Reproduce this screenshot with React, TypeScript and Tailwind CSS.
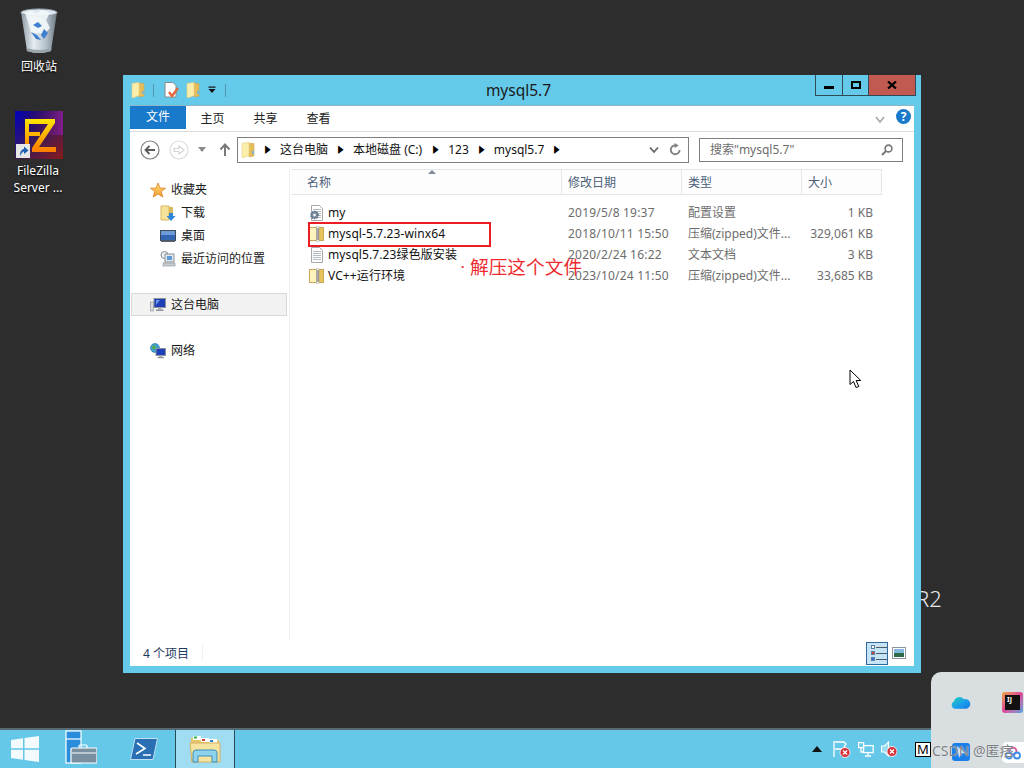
import React from "react";

const FONT = { fontFamily: '"Noto Sans", "Noto Sans CJK SC", sans-serif' };

function Folder({ className = "" }: { className?: string }) {
  return (
    <svg viewBox="0 0 14 16" className={className}>
      <path d="M5 1 L13 1.5 V14 L8 15 Z" fill="#e3bd5c" stroke="#cba347" strokeWidth="0.5" />
      <path d="M1 1.5 L8 0.5 V13.5 L3 15.5 H1 Z" fill="#fbeeab" stroke="#ead27e" strokeWidth="0.6" />
      <rect x="11" y="9" width="2" height="3" fill="#7fb4cc" />
    </svg>
  );
}

function Zip({ className = "" }: { className?: string }) {
  return (
    <svg viewBox="0 0 16 16" className={className}>
      <rect x="0.5" y="1.5" width="14" height="13" fill="#f5da7e" stroke="#c9a953" />
      <rect x="1" y="2" width="6" height="12" fill="#fdf3bd" />
      <rect x="10" y="2" width="4" height="12" fill="#e8c25a" />
      <rect x="7.5" y="0.8" width="2.5" height="14.4" fill="#fff" stroke="#9a9a9a" strokeWidth="0.5" />
      <path d="M7.5 3h2.5M7.5 5h2.5M7.5 7h2.5M7.5 9h2.5M7.5 11h2.5M7.5 13h2.5" stroke="#444" strokeWidth="0.9" />
    </svg>
  );
}

function Doc({ className = "", gear = false }: { className?: string; gear?: boolean }) {
  return (
    <svg viewBox="0 0 16 16" className={className}>
      <path d="M2.5 0.5 H10.5 L13.5 3.5 V15.5 H2.5 Z" fill="#fff" stroke="#a8a8a8" />
      <path d="M4 4.5h8M4 6.5h8M4 8.5h8M4 10.5h8M4 12.5h8" stroke="#b4bcc4" />
      {gear && (
        <g>
          <circle cx="5.5" cy="10" r="3.6" fill="#7d8ea0" stroke="#556678" strokeWidth="1.3" strokeDasharray="1.4 0.9" />
          <circle cx="5.5" cy="10" r="1.3" fill="#fff" />
        </g>
      )}
    </svg>
  );
}

function Row({ icon, name, date, type, size }: { icon: React.ReactNode; name: string; date: string; type: string; size: string }) {
  return (
    <div className="grid grid-cols-[271px_120px_120px_80px] h-[21px] items-center text-[12px] leading-[21px]">
      <div className="pl-[18px] flex items-center gap-[3px] text-[#111] tracking-[0.1px] whitespace-nowrap">
        {icon}
        <span>{name}</span>
      </div>
      <div className="pl-[6px] text-[#6d6d6d] tracking-[0.2px]">{date}</div>
      <div className="pl-[6px] text-[#6d6d6d] whitespace-nowrap">{type}</div>
      <div className="pr-[9px] text-right text-[#6d6d6d] whitespace-nowrap">{size}</div>
    </div>
  );
}

function HeadCell({ label, border = true, pl = "pl-[6px]" }: { label: string; border?: boolean; pl?: string }) {
  return (
    <div className={`${pl} pt-[1px] h-full flex items-center text-[12px] text-[#4c607a] ${border ? "border-r border-[#e5e5e5]" : ""}`}>
      {label}
    </div>
  );
}

function NavItem({ icon, label, sub }: { icon: React.ReactNode; label: string; sub?: boolean }) {
  return (
    <div className={`h-[23px] flex items-center text-[12px] text-[#1a1a1a] ${sub ? "pl-[30px] gap-[5px]" : "pl-[20px] gap-[5px]"}`}>
      {icon}
      <span>{label}</span>
    </div>
  );
}

function Star() {
  return (
    <svg viewBox="0 0 16 16" className="w-[16px] h-[16px]">
      <defs>
        <linearGradient id="st" x1="0" y1="0" x2="0" y2="1">
          <stop offset="0" stopColor="#ffe27a" />
          <stop offset="1" stopColor="#f59a2c" />
        </linearGradient>
      </defs>
      <path d="M8 1 L10 6 L15.5 6.3 L11.2 9.6 L12.8 15 L8 12 L3.2 15 L4.8 9.6 L0.5 6.3 L6 6 Z" fill="url(#st)" stroke="#e07f22" strokeWidth="0.8" />
    </svg>
  );
}

function Monitor({ className = "" }: { className?: string }) {
  return (
    <svg viewBox="0 0 16 16" className={className}>
      <rect x="0.5" y="5" width="3" height="9" fill="#d8dcdf" stroke="#8a9096" strokeWidth="0.6" />
      <rect x="4" y="1.5" width="11.5" height="9" fill="#1f3fb8" stroke="#8d9399" />
      <path d="M6 3h4L6 8z" fill="#6f95e6" />
      <rect x="8" y="10.5" width="3.5" height="2" fill="#aab0b6" />
      <rect x="6" y="12.5" width="7.5" height="1.5" fill="#8d9399" />
    </svg>
  );
}

function Crumb({ className = "" }: { className?: string }) {
  return <span className={`${className} text-[9px] leading-none text-black scale-x-75`}>▶</span>;
}

export default function App() {
  return (
    <div style={FONT} className="w-[1024px] h-[768px] flex flex-col overflow-hidden bg-[#2d2d2d]">
      {/* Desktop */}
      <div className="relative flex-1">
        {/* Recycle bin */}
        <div className="absolute left-[8px] top-[8px] w-[62px] flex flex-col items-center">
          <svg viewBox="0 0 38 46" className="w-[38px] h-[46px]">
            <defs>
              <linearGradient id="bin" x1="0" y1="0" x2="1" y2="0">
                <stop offset="0" stopColor="#8d9aa3" />
                <stop offset="0.35" stopColor="#e6edf2" />
                <stop offset="0.7" stopColor="#b3c0ca" />
                <stop offset="1" stopColor="#6d7880" />
              </linearGradient>
            </defs>
            <path d="M1 4 L7 43 Q19 47 31 43 L37 4 Z" fill="url(#bin)" />
            <ellipse cx="19" cy="4.5" rx="18" ry="3.6" fill="#dce7ef" stroke="#8995a0" />
            <path d="M5 5 L11 2 L16 5 L22 2 L30 5 L26 12 L30 20 L24 26 L11 24 L8 14 Z" fill="#f3f7fa" opacity="0.9" />
            <path d="M13 17 L18 14 L22 18 L18 20 Z M24 21 L28 25 L24 31 L21 27 Z M11 24 L16 31 L21 32 L17 27 Z" fill="#3f7fd0" />
            <path d="M7 43 Q19 47 31 43 L31.5 40 Q19 44 6.5 40 Z" fill="#9aa4ab" />
          </svg>
          <div className="mt-[5px] text-[12px] leading-[16px] text-white [text-shadow:0_1px_2px_#000]">回收站</div>
        </div>
        {/* FileZilla */}
        <div className="absolute left-[7px] top-[111px] w-[62px] flex flex-col items-center">
          <div className="relative w-[48px] h-[48px] ml-[2px]">
            <svg viewBox="0 0 48 48" className="w-[48px] h-[48px]">
              <defs>
                <linearGradient id="fzbg" x1="0" y1="0" x2="1" y2="1">
                  <stop offset="0" stopColor="#0000c8" />
                  <stop offset="0.5" stopColor="#3a1a5a" />
                  <stop offset="1" stopColor="#8a1a1a" />
                </linearGradient>
                <linearGradient id="fzbg2" x1="0" y1="0" x2="1" y2="0">
                  <stop offset="0" stopColor="#000" stopOpacity="0" />
                  <stop offset="1" stopColor="#8d1fa0" stopOpacity="0.8" />
                </linearGradient>
                <linearGradient id="fzl" x1="0" y1="0" x2="0" y2="1">
                  <stop offset="0" stopColor="#ffe600" />
                  <stop offset="1" stopColor="#ff7a00" />
                </linearGradient>
              </defs>
              <rect width="48" height="48" fill="url(#fzbg)" />
              <rect width="48" height="24" fill="url(#fzbg2)" />
              <path d="M10 8 H40 V12 L24 36 H41 V41 H17 V37 L33 13 H14 V21 H25 V25 H14 V41 H10 Z" fill="url(#fzl)" />
            </svg>
            <div className="absolute left-[1px] bottom-[1px] w-[14px] h-[14px] bg-[#e6e6e6] flex items-center justify-center">
              <svg viewBox="0 0 12 12" className="w-[12px] h-[12px]">
                <path d="M3 11 C3 6 5 4 7 4 V1.5 L11.5 5.5 L7 9 V6.5 C6 6.5 4.5 8 3 11 Z" fill="#1f5fb0" />
              </svg>
            </div>
          </div>
          <div className="mt-[3px] text-[12px] leading-[17px] text-white text-center whitespace-nowrap [text-shadow:0_1px_2px_#000]">
            FileZilla
            <br />
            Server ...
          </div>
        </div>

        {/* Server edition mark */}
        <div className="absolute left-[916px] top-[581px] text-[22px] leading-[34px] font-light text-[#e8e8e8]">R2</div>

        {/* Explorer window */}
        <div className="absolute left-[123px] top-[75px] w-[798px] h-[598px] bg-[#65c9ea] flex flex-col">
          <div className="relative h-[30px] flex items-center pl-[8px] shrink-0">
            <Folder className="w-[14px] h-[16px]" />
            <div className="ml-[8px] w-px h-[13px] bg-[#5a93ad]" />
            <svg viewBox="0 0 15 16" className="ml-[10px] w-[15px] h-[16px]">
              <path d="M1 0.5 H9 L12 3.5 V15 H1 Z" fill="#fff" stroke="#8a8a8a" />
              <path d="M5 10 L8 14 L14 6" fill="none" stroke="#e2683c" strokeWidth="2.4" />
            </svg>
            <Folder className="ml-[7px] w-[14px] h-[16px]" />
            <svg viewBox="0 0 8 8" className="ml-[8px] w-[8px] h-[8px]">
              <rect x="0.5" y="0.5" width="7" height="1.2" fill="#111" />
              <path d="M0.5 3 H7.5 L4 7 Z" fill="#111" />
            </svg>
            <div className="ml-[9px] w-px h-[13px] bg-[#5a93ad]" />
            <div className="absolute inset-x-0 top-0 h-[30px] pr-[7px] text-center text-[15.5px] leading-[30px] text-[#1a1a1a]">mysql5.7</div>
            <div className="absolute right-[5px] top-0 h-[21px] flex border border-t-0 border-[#2f4a58] text-black">
              <div className="w-[27px] flex items-center justify-center border-r border-[#2f4a58]">
                <div className="w-[10px] h-[3px] bg-black mt-[5px]" />
              </div>
              <div className="w-[26px] flex items-center justify-center border-r border-[#2f4a58]">
                <div className="w-[10px] h-[8px] border-2 border-black" />
              </div>
              <div className="w-[46px] bg-[#c15a50] flex items-center justify-center">
                <svg viewBox="0 0 10 8" className="w-[10px] h-[8px]">
                  <path d="M1 0.5 L9 7.5 M9 0.5 L1 7.5" stroke="#000" strokeWidth="2.2" />
                </svg>
              </div>
            </div>
          </div>

          <div className="mx-[7px] mb-[7px] flex-1 bg-white flex flex-col min-h-0 border-t border-[#8fb6c6]">
            {/* Tabs */}
            <div className="h-[26px] flex border-b border-[#dadbdc] text-[12px] text-[#222] shrink-0">
              <div className="w-[56px] h-[23px] bg-[#1979ca] text-white flex items-center justify-center pb-[2px]">文件</div>
              <div className="w-[53px] h-[25px] flex items-center justify-center">主页</div>
              <div className="w-[53px] h-[25px] flex items-center justify-center">共享</div>
              <div className="w-[53px] h-[25px] flex items-center justify-center">查看</div>
              <div className="flex-1" />
              <svg viewBox="0 0 10 8" className="w-[10px] h-[8px] mt-[10px]">
                <path d="M1 1 L5 6 L9 1" fill="none" stroke="#a0a6aa" strokeWidth="1.6" />
              </svg>
              <div className="ml-[11px] mr-[3px] mt-[3px] w-[15px] h-[15px] rounded-full bg-[#1979ca] text-white text-[12px] leading-[15px] font-bold text-center">?</div>
            </div>

            {/* Address row */}
            <div className="h-[35px] flex items-center pl-[10px] shrink-0">
              <svg viewBox="0 0 20 20" className="w-[20px] h-[20px]">
                <circle cx="10" cy="10" r="9" fill="#fff" stroke="#7f7f7f" strokeWidth="1.2" />
                <path d="M15 10 H6 M9.5 6 L5.5 10 L9.5 14" fill="none" stroke="#5c5c5c" strokeWidth="1.8" />
              </svg>
              <svg viewBox="0 0 20 20" className="ml-[9px] w-[20px] h-[20px]">
                <circle cx="10" cy="10" r="9" fill="#fff" stroke="#dcdcdc" strokeWidth="1.2" />
                <path d="M5 8.5 H10 V6 L15 10 L10 14 V11.5 H5 Z" fill="none" stroke="#d4d4d4" strokeWidth="1.2" />
              </svg>
              <svg viewBox="0 0 8 5" className="ml-[9px] w-[8px] h-[5px]">
                <path d="M0 0 H8 L4 5 Z" fill="#8a8a8a" />
              </svg>
              <svg viewBox="0 0 12 14" className="ml-[13px] w-[12px] h-[14px]">
                <path d="M6 13 V2 M1.5 6.5 L6 1.5 L10.5 6.5" fill="none" stroke="#7a7a7a" strokeWidth="2" />
              </svg>
              <div className="ml-[6px] w-[452px] h-[26px] border border-[#7f7f7f] flex items-center text-[12px] text-[#111] whitespace-nowrap">
                <Folder className="ml-[3px] w-[14px] h-[16px]" />
                <Crumb className="ml-[8px]" />
                <span className="ml-[8px]">这台电脑</span>
                <Crumb className="ml-[8px]" />
                <span className="ml-[8px]">本地磁盘 (C:)</span>
                <Crumb className="ml-[9px]" />
                <span className="ml-[8px]">123</span>
                <Crumb className="ml-[8px]" />
                <span className="ml-[8px]">mysql5.7</span>
                <Crumb className="ml-[8px]" />
                <div className="flex-1" />
                <svg viewBox="0 0 10 8" className="w-[10px] h-[8px]">
                  <path d="M1 1.5 L5 6 L9 1.5" fill="none" stroke="#666" strokeWidth="1.8" />
                </svg>
                <svg viewBox="0 0 14 14" className="ml-[10px] mr-[6px] w-[13px] h-[13px]">
                  <path d="M11.5 7.5 A4.8 4.8 0 1 1 7 2.5" fill="none" stroke="#808080" strokeWidth="2" />
                  <path d="M6 0 L10.5 2.8 L6 5.5 Z" fill="#808080" />
                </svg>
              </div>
              <div className="ml-[10px] w-[204px] h-[24px] border border-[#7f7f7f] flex items-center pl-[10px] pr-[9px] text-[12px] text-[#6d6d6d]">
                <span className="flex-1">搜索"mysql5.7"</span>
                <svg viewBox="0 0 12 12" className="w-[12px] h-[12px]">
                  <circle cx="7.5" cy="4.5" r="3.4" fill="none" stroke="#777" strokeWidth="1.6" />
                  <path d="M5 7 L1 11" stroke="#777" strokeWidth="2" />
                </svg>
              </div>
            </div>

            {/* Body */}
            <div className="flex-1 flex min-h-0">
              <div className="w-[160px] border-r border-[#f0f0f0] pt-[11px] shrink-0">
                <NavItem icon={<Star />} label="收藏夹" />
                <NavItem sub icon={<svg viewBox="0 0 16 16" className="w-[16px] h-[16px]"><path d="M1 1 H9 V15 H1 Z" fill="#f6e39a" stroke="#d6b961" /><path d="M9 2 H13 V8 H9 Z" fill="#d9b75c" /><path d="M9 8 H13 V11 H15.5 L11 16 L6.5 11 H9 Z" fill="#2f87dc" /></svg>} label="下载" />
                <NavItem sub icon={<svg viewBox="0 0 16 16" className="w-[16px] h-[16px]"><rect x="0.5" y="2.5" width="15" height="10" fill="#3365b4" stroke="#3d4a58" /><rect x="1" y="3" width="14" height="4" fill="#6d9ad8" /><rect x="1" y="12.5" width="14" height="1.5" fill="#59636e" /></svg>} label="桌面" />
                <NavItem sub icon={<svg viewBox="0 0 16 16" className="w-[16px] h-[16px]"><circle cx="4.5" cy="4" r="3.5" fill="#eef2f4" stroke="#838a90" /><rect x="5" y="3" width="9" height="8" fill="#dfe8ef" stroke="#8a9299" /><rect x="7" y="5" width="5" height="4" fill="#5b9ad4" /><rect x="3" y="12" width="12" height="3" fill="#c8cdd1" stroke="#8a9299" strokeWidth="0.6" /></svg>} label="最近访问的位置" />
                <div className="mt-[23px] ml-[1px] w-[156px] h-[23px] box-border bg-[#f2f2f2] border border-[#d9d9d9] flex items-center pl-[18px] gap-[5px] text-[12px] text-[#1a1a1a]">
                  <Monitor className="w-[16px] h-[16px]" />
                  <span>这台电脑</span>
                </div>
                <div className="mt-[23px]">
                  <NavItem icon={<svg viewBox="0 0 16 16" className="w-[16px] h-[16px]"><circle cx="5" cy="5" r="4.5" fill="#3f9fd8" stroke="#2a6f9c" strokeWidth="0.6" /><path d="M2 3 L5 2 L6 5 L3 7 Z" fill="#58b04a" /><rect x="6" y="5.5" width="9.5" height="7" fill="#1f3fb8" stroke="#8d9399" /><rect x="9" y="12.5" width="3.5" height="1.5" fill="#aab0b6" /><rect x="7.5" y="14" width="6.5" height="1.2" fill="#8d9399" /></svg>} label="网络" />
                </div>
              </div>
              <div className="flex-1 pt-[2px] pl-[1px] min-w-0">
                <div className="relative grid grid-cols-[271px_120px_120px_80px] w-[591px] h-[26px] bg-[#fdfdfd] border-y border-[#e5e5e5] box-border">
                  <HeadCell label="名称" pl="pl-[16px]" />
                  <HeadCell label="修改日期" />
                  <HeadCell label="类型" />
                  <HeadCell label="大小" />
                  <svg viewBox="0 0 8 4" className="absolute left-[137px] top-[0px] w-[8px] h-[4px]">
                    <path d="M0 4 L4 0 L8 4 Z" fill="#7f8a96" />
                  </svg>
                </div>
                <div className="pt-[7px]">
                  <Row icon={<Doc gear className="w-[16px] h-[16px]" />} name="my" date="2019/5/8 19:37" type="配置设置" size="1 KB" />
                  <Row icon={<Zip className="w-[16px] h-[16px]" />} name="mysql-5.7.23-winx64" date="2018/10/11 15:50" type="压缩(zipped)文件..." size="329,061 KB" />
                  <Row icon={<Doc className="w-[16px] h-[16px]" />} name="mysql5.7.23绿色版安装" date="2020/2/24 16:22" type="文本文档" size="3 KB" />
                  <Row icon={<Zip className="w-[16px] h-[16px]" />} name="VC++运行环境" date="2023/10/24 11:50" type="压缩(zipped)文件..." size="33,685 KB" />
                </div>
              </div>
            </div>

            {/* Status bar */}
            <div className="h-[26px] flex items-center pl-[13px] text-[12px] text-[#1e3a5f] shrink-0">
              <span className="w-[59px] pt-[2px]">4 个项目</span>
              <div className="w-px h-[16px] bg-[#f0f0f0]" />
              <div className="flex-1" />
              <div className="w-[22px] h-[23px] bg-[#c7e3f6] border border-[#2f6a9b] flex flex-col justify-center gap-[2px] pl-[4px]">
                <div className="flex items-center gap-[1px]"><div className="w-[4px] h-[4px] bg-white border border-[#5b7da0]" /><div className="w-[11px] h-px bg-[#4b5b6b]" /></div>
                <div className="flex items-center gap-[1px]"><div className="w-[4px] h-[4px] bg-[#d83a3a] border border-[#5b7da0]" /><div className="w-[11px] h-px bg-[#4b5b6b]" /></div>
                <div className="flex items-center gap-[1px]"><div className="w-[4px] h-[4px] bg-[#3a6fd8] border border-[#5b7da0]" /><div className="w-[11px] h-px bg-[#4b5b6b]" /></div>
              </div>
              <svg viewBox="0 0 14 12" className="ml-[4px] mr-[8px] w-[14px] h-[12px]">
                <rect x="0.5" y="0.5" width="13" height="11" fill="#fff" stroke="#8a96a0" />
                <rect x="2" y="2" width="10" height="4" fill="#7fb9dc" />
                <rect x="2" y="6" width="10" height="4" fill="#2f6a4a" />
              </svg>
            </div>
          </div>

          {/* Annotation */}
          <div className="absolute left-[185px] top-[147px] w-[183px] h-[25px] border-2 border-[#ec1c24]" />
          <div className="absolute left-[338px] top-[179px] flex items-center text-[#ee2a2f] whitespace-nowrap">
            <span className="text-[12px] leading-[26px] w-[9px] font-bold">·</span>
            <span className="text-[18.7px] leading-[26px]">解压这个文件</span>
          </div>
        </div>

        {/* Mouse cursor */}
        <svg viewBox="0 0 13 20" className="absolute left-[849px] top-[369px] w-[13px] h-[20px]">
          <path d="M1 1 V15.5 L4.5 12.5 L7 18.5 L9.8 17.5 L7.2 11.5 L11.8 11.5 Z" fill="#fff" stroke="#000" />
        </svg>

        {/* Floating tray panel */}
        <div className="absolute right-0 top-[672px] z-10 w-[93px] h-[96px] bg-[#d9dfe1] rounded-tl-[10px]">
          <svg viewBox="0 0 22 16" className="absolute left-[19px] top-[22px] w-[21px] h-[16px]">
            <defs>
              <linearGradient id="cl" x1="0" y1="0" x2="1" y2="1">
                <stop offset="0" stopColor="#22d0b8" />
                <stop offset="0.6" stopColor="#1a9bee" />
                <stop offset="1" stopColor="#1577e0" />
              </linearGradient>
            </defs>
            <path d="M5 15 A4 4 0 0 1 4 7.5 A6 6 0 0 1 14.5 5 A5 5 0 0 1 17.5 15 Z" fill="url(#cl)" />
          </svg>
          <div className="absolute left-[71px] top-[20px] w-[21px] h-[21px] bg-gradient-to-br from-[#f0a020] via-[#e0409a] to-[#1c9fe0] rounded-[3px] flex items-center justify-center">
            <div className="w-[15px] h-[15px] bg-[#111] text-white text-[7px] leading-[10px] font-bold pl-[2px]">IJ</div>
          </div>
          <div className="absolute left-[21px] top-[71px] w-[18px] h-[18px] rounded-[3px] bg-[#1a7fe8] flex items-center justify-center">
            <svg viewBox="0 0 10 12" className="w-[10px] h-[12px]"><path d="M1 0 L9 7 L5 7.5 L3 12 Z" fill="#cfe8ff" /></svg>
          </div>
          <div className="absolute left-[71px] top-[70px] w-[22px] h-[21px] rounded-l-[5px] bg-white flex items-center justify-center">
            <svg viewBox="0 0 16 14" className="w-[16px] h-[14px]">
              <circle cx="8" cy="5" r="3.4" fill="none" stroke="#e0508a" strokeWidth="1.8" />
              <circle cx="4" cy="9.5" r="3" fill="none" stroke="#3a8ee8" strokeWidth="1.8" />
              <circle cx="12" cy="9.5" r="3" fill="none" stroke="#3a8ee8" strokeWidth="1.8" />
            </svg>
          </div>
          <div className="absolute left-[1px] top-[69px] text-[14px] leading-[20px] text-[#7a7f83] whitespace-nowrap [text-shadow:0_0_1px_#fff]">CSDN @匿痞</div>
        </div>
      </div>

      {/* Taskbar */}
      <div className="h-[40px] shrink-0 bg-[#65c8e9] border-t-2 border-[#556a72] flex items-center">
        <svg viewBox="0 0 28 26" className="ml-[11px] w-[28px] h-[26px]">
          <path d="M0 4 L12 2.2 V12.2 H0 Z M13.5 2 L28 0 V12.2 H13.5 Z M0 13.8 H12 V23.8 L0 22 Z M13.5 13.8 H28 V26 L13.5 24 Z" fill="#fff" fillOpacity="0.92" />
        </svg>
        <svg viewBox="0 0 32 36" className="ml-[26px] w-[32px] h-[36px] -mt-[2px]">
          <rect x="1" y="1" width="15" height="32" fill="#2a8ddc" stroke="#fff" strokeWidth="1.2" />
          <path d="M1 9 H16" stroke="#fff" strokeWidth="1.2" />
          <path d="M14 18 V16 Q14 15 15 15 H21 Q22 15 22 16 V18" fill="none" stroke="#fff" strokeWidth="1.2" />
          <rect x="6" y="18" width="26" height="15" rx="1" fill="#78909f" stroke="#fff" strokeWidth="1.2" />
          <path d="M7 23 H31" stroke="#fff" strokeWidth="1" />
        </svg>
        <svg viewBox="0 0 28 22" className="ml-[33px] w-[28px] h-[22px]">
          <path d="M5 0.5 H27.5 L23 21.5 H0.5 Z" fill="#2a6fb4" stroke="#bfe0f2" />
          <path d="M7 5 L15 10.5 L6 16 M13 17 H21" fill="none" stroke="#fff" strokeWidth="1.6" />
        </svg>
        <div className="ml-[17px] w-[60px] h-full bg-[#a0dcf2] border-x border-[#2b4a58] flex items-center justify-center">
          <svg viewBox="0 0 32 30" className="w-[32px] h-[30px]">
            <path d="M2 4 H14 L16 6 H30 V28 H2 Z" fill="#e8c568" />
            <rect x="4" y="2" width="8" height="4" fill="#fff" />
            <rect x="5" y="2.5" width="3" height="2" fill="#2bb34a" />
            <rect x="12" y="4" width="8" height="4" fill="#fff" />
            <rect x="13" y="5" width="3" height="2" fill="#d0402a" />
            <rect x="20" y="5" width="8" height="4" fill="#fff" />
            <rect x="21" y="6" width="3" height="2" fill="#2a7fd0" />
            <path d="M1 9 H31 V28 H3 Z" fill="#f5e3a0" stroke="#d3b262" />
            <path d="M4 28 V19 Q4 16 7 16 H25 Q28 16 28 19 V28 H23 V22 H9 V28 Z" fill="#8fd2ee" stroke="#3d8fb8" />
          </svg>
        </div>
        <div className="flex-1" />
        <svg viewBox="0 0 10 6" className="w-[10px] h-[6px] mr-[11px]"><path d="M0 6 L5 0 L10 6 Z" fill="#111" /></svg>
        <svg viewBox="0 0 18 17" className="w-[18px] h-[17px] mr-[7px]">
          <path d="M1 0 V16 M2 1 H11 L13 3 L11 6 L13 8 H2" fill="none" stroke="#fff" strokeWidth="1.3" />
          <circle cx="12" cy="11.5" r="5" fill="#d8313a" stroke="#fff" strokeWidth="0.8" />
          <path d="M10 9.5 L14 13.5 M14 9.5 L10 13.5" stroke="#fff" strokeWidth="1.3" />
        </svg>
        <svg viewBox="0 0 16 15" className="w-[16px] h-[15px] mr-[7px]">
          <rect x="0.6" y="0.6" width="5" height="5" fill="none" stroke="#fff" strokeWidth="1.3" />
          <path d="M3 5.6 V10 H6" fill="none" stroke="#fff" strokeWidth="1.3" />
          <rect x="5.6" y="3.6" width="9.6" height="7" fill="none" stroke="#fff" strokeWidth="1.3" />
          <path d="M10 11 V13 M7 14 H13" stroke="#fff" strokeWidth="1.3" />
        </svg>
        <svg viewBox="0 0 16 16" className="w-[16px] h-[16px] mr-[18px]">
          <path d="M0.5 5 H3.5 L7.5 1 V15 L3.5 11 H0.5 Z" fill="#9adcf0" stroke="#fff" strokeWidth="1.1" />
          <circle cx="11" cy="10.5" r="5" fill="#d8313a" stroke="#fff" strokeWidth="0.8" />
          <path d="M9 8.5 L13 12.5 M13 8.5 L9 12.5" stroke="#fff" strokeWidth="1.3" />
        </svg>
        <div className="w-[16px] h-[15px] mr-[93px] bg-white border border-black text-black text-[13px] leading-[13px] text-center">M</div>
      </div>
    </div>
  );
}
